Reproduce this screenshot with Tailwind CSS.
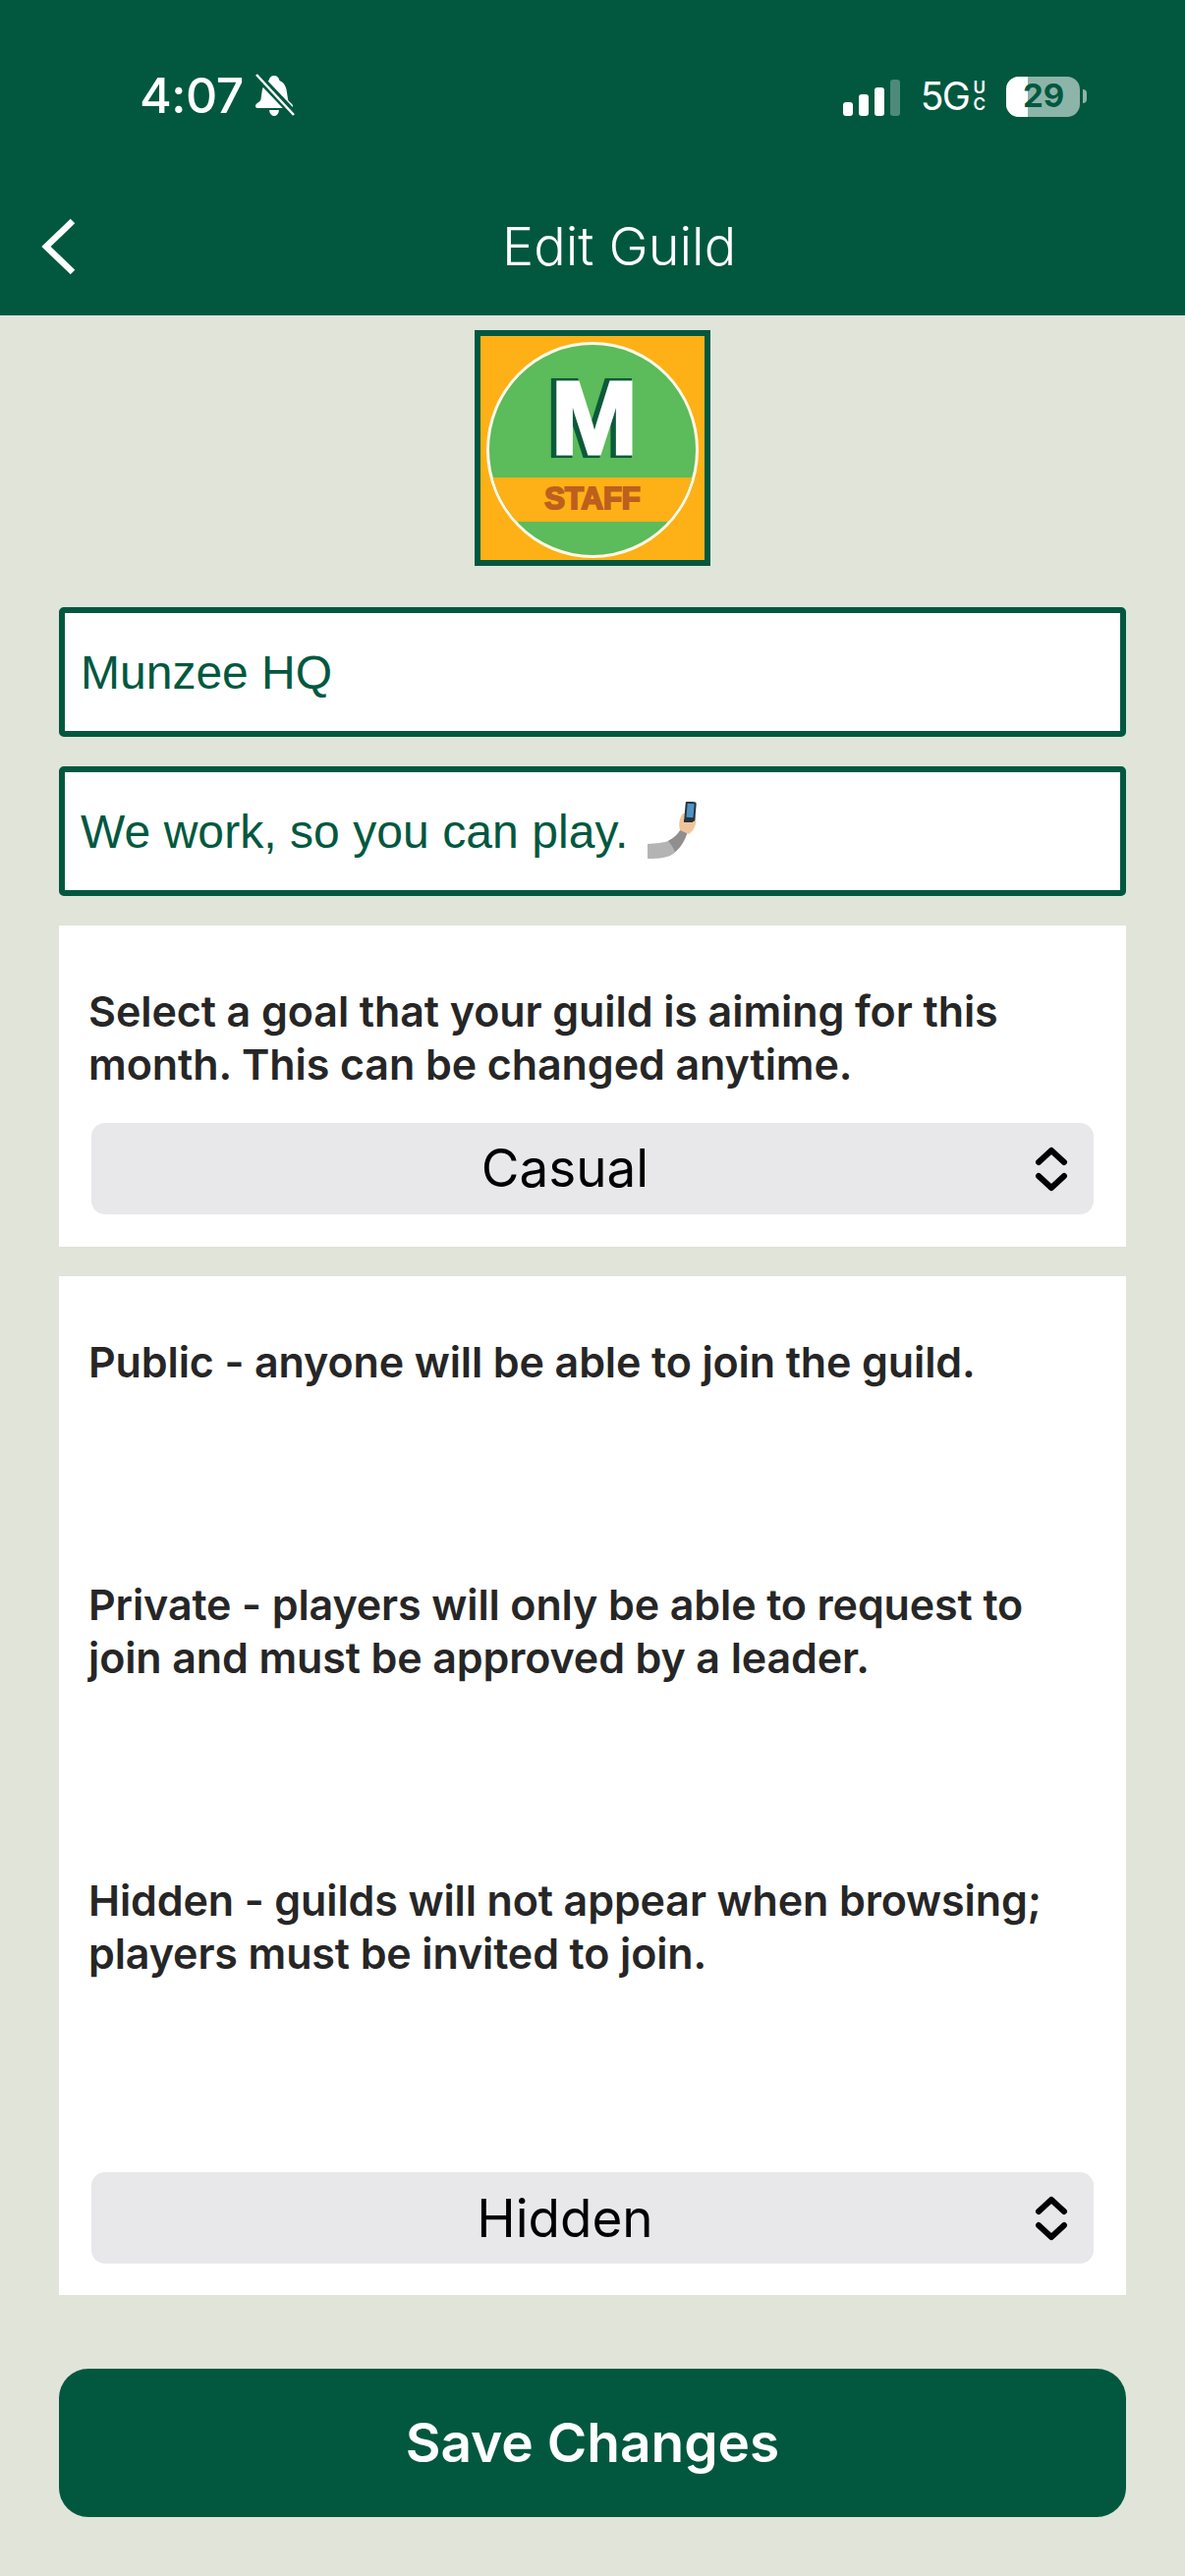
<!DOCTYPE html>
<html lang="en">
<head>
    <meta charset="UTF-8">
    <meta name="viewport" content="width=device-width, initial-scale=1.0">
    <title>Edit Guild</title>
    <script src="https://cdn.jsdelivr.net/npm/@tailwindcss/browser@4"></script>
</head>
<body class="w-[1206px] h-[2622px] overflow-hidden bg-[#e0e4d9] font-['Inter',sans-serif]">
    <header class="h-[321px] bg-[#01583f] text-white">
        <!-- status bar -->
        <div class="h-[221px] pt-[70px] pl-[142px] pr-[100px] flex justify-between items-start">
            <div class="flex items-center h-[54px]">
                <span class="text-[50px] leading-[54px] font-medium tracking-[-0.5px]">4:07</span>
                <svg class="ml-[12px]" width="40" height="44" viewBox="0 0 40 44">
                    <path fill="#fff" d="M19 2c3 0 5 2 5.500 5 5 2 7 7 7.500 12l1 7c.5 3 5 4 5 7 0 1.500-1 2-3 2H3c-2 0-3-.5-3-2 0-3 5-4 5.500-7l1-7c.5-5 3-10 7-12 .5-3 2.500-5 5.500-5z"/>
                    <path fill="#fff" d="M14 37h10c-.5 4-2.500 6-5 6s-4.500-2-5-6z"/>
                    <path stroke="#01583f" stroke-width="8" d="M0 0l40 42"/>
                    <path stroke="#fff" stroke-width="2.500" d="M1 1l38 41"/>
                </svg>
            </div>
            <div class="flex items-center h-[54px] pt-[2px]">
                <div class="flex items-end gap-[6px] h-[38px] mt-[1px]">
                    <span class="w-[10px] h-[14px] rounded-[3px] bg-white"></span>
                    <span class="w-[10px] h-[22px] rounded-[3px] bg-white"></span>
                    <span class="w-[10px] h-[29px] rounded-[3px] bg-white"></span>
                    <span class="w-[10px] h-[37px] rounded-[3px] bg-white/30"></span>
                </div>
                <span class="ml-[21px] text-[39px] leading-[40px] tracking-[-1.500px]">5G</span>
                <div class="ml-[4px] flex flex-col text-[17px] leading-[17px] font-semibold">
                    <span>U</span>
                    <span>C</span>
                </div>
                <div class="ml-[21px] relative w-[75px] h-[41px] rounded-[13px] bg-white/55 overflow-hidden">
                    <div class="w-[22px] h-full bg-white"></div>
                    <span class="absolute inset-0 flex items-center justify-center pl-[1px] text-[#01583f] text-[33px] font-bold">29</span>
                </div>
                <div class="ml-[3px] w-[4px] h-[14px] rounded-r-full bg-white/55"></div>
            </div>
        </div>
        <!-- nav -->
        <div class="flex items-center h-[60px] pl-[42px]">
            <svg width="36" height="58" viewBox="0 0 36 58" fill="none">
                <path d="M32 3L5 29l27 26" stroke="#fff" stroke-width="6.500"/>
            </svg>
            <h1 class="ml-[433px] text-[54px] leading-[60px] font-light">Edit Guild</h1>
        </div>
    </header>

    <main class="px-[60px]">
        <!-- badge -->
        <div class="mx-auto mt-[15px] w-[240px] h-[240px] border-[6px] border-[#01583f] bg-[#fdb116]">
            <svg width="228" height="228" viewBox="0 0 228 228">
                <defs>
                    <clipPath id="disc"><ellipse cx="114" cy="116" rx="105" ry="107"/></clipPath>
                </defs>
                <ellipse cx="114" cy="116" rx="108" ry="110" fill="#fff8e8"/>
                <g clip-path="url(#disc)">
                    <rect width="228" height="228" fill="#5cbb5a"/>
                    <rect y="144" width="228" height="45" fill="#fdb116"/>
                </g>
                <text x="113" y="120" text-anchor="middle" font-family="Liberation Sans" font-weight="700" font-size="106" fill="#0c5a3a" stroke="#0c5a3a" stroke-width="8">M</text>
                <text x="116" y="120" text-anchor="middle" font-family="Liberation Sans" font-weight="700" font-size="106" fill="#fff" stroke="#fff" stroke-width="3">M</text>
                <text x="114" y="176" text-anchor="middle" font-family="Liberation Sans" font-weight="700" font-size="31" fill="#bd5f1e" stroke="#bd5f1e" stroke-width="2">STAFF</text>
            </svg>
        </div>

        <!-- name / tagline -->
        <div class="mt-[42px] h-[132px] flex items-center pl-[16px] pt-[2px] bg-white border-[6px] border-[#01583f] rounded-[5px] text-[#01583f] text-[48px] font-['Liberation_Sans',sans-serif]">Munzee HQ</div>
        <div class="mt-[30px] h-[132px] flex items-center pl-[16px] pt-[2px] bg-white border-[6px] border-[#01583f] rounded-[5px] text-[#01583f] text-[48px] font-['Liberation_Sans',sans-serif]">
            <span class="tracking-[0.06px]">We work, so you can play.</span>
            <svg class="ml-[20px] mt-[-4px]" width="50" height="58" viewBox="0 0 50 58">
                <path fill="#b4b4b4" d="M0 43c9-1 16-1 21-3 6-3 10-7 13-12l7 2c-3 11-9 20-18 25-8 3-16 3-23 3z"/>
                <path fill="#8f8f8f" d="M21 40c6-3 10-7 13-12l7 2c-3 9-7 16-13 21-2-4-4-8-7-11z"/>
                <path fill="#f0c49a" d="M33 29c-2-7 0-13 3-17h12c3 8 1 16-6 21z"/>
                <rect x="38" y="0" width="11" height="20" rx="2" transform="rotate(5 44 10)" fill="#26333d"/>
                <rect x="40" y="2" width="7" height="14" transform="rotate(5 44 10)" fill="#4f93c4"/>
                <rect x="37" y="18" width="9" height="3" fill="#26333d"/>
            </svg>
        </div>

        <!-- goal -->
        <section class="mt-[30px] bg-white pt-[60px] pb-[33px] px-[30px]">
            <p class="text-[43px] leading-[54px] font-semibold tracking-[-0.08px] text-[#262626]">Select a goal that your guild is aiming for this<br>month. This can be changed anytime.</p>
            <div class="relative mt-[33px] mr-[3px] ml-[3px] h-[93px] rounded-[14px] bg-[#e8e8ea] flex items-center justify-center pr-[56px] text-[53px] text-black">
                Casual
                <svg class="absolute right-[26px] top-[24px]" width="34" height="46" viewBox="0 0 34 46" fill="none" stroke="#000" stroke-width="6" stroke-linecap="round" stroke-linejoin="round">
                    <path d="M4 16L17 4l13 12"/>
                    <path d="M4 30l13 12 13-12"/>
                </svg>
            </div>
        </section>

        <!-- visibility -->
        <section class="mt-[30px] bg-white pt-[60px] pb-[32px] px-[30px] text-[43px] leading-[54px] font-semibold tracking-[-0.12px] text-[#262626]">
            <p>Public - anyone will be able to join the guild.</p>
            <p class="mt-[193px]">Private - players will only be able to request to<br>join and must be approved by a leader.</p>
            <p class="mt-[193px]">Hidden - guilds will not appear when browsing;<br>players must be invited to join.</p>
            <div class="relative mt-[196px] mr-[3px] ml-[3px] h-[93px] rounded-[14px] bg-[#e8e8ea] flex items-center justify-center pr-[56px] text-[53px] font-normal tracking-normal text-black">
                Hidden
                <svg class="absolute right-[26px] top-[24px]" width="34" height="46" viewBox="0 0 34 46" fill="none" stroke="#000" stroke-width="6" stroke-linecap="round" stroke-linejoin="round">
                    <path d="M4 16L17 4l13 12"/>
                    <path d="M4 30l13 12 13-12"/>
                </svg>
            </div>
        </section>

        <button class="mt-[75px] w-full h-[151px] rounded-[30px] bg-[#01583f] text-white text-[55px] font-semibold">Save Changes</button>
    </main>
</body>
</html>
